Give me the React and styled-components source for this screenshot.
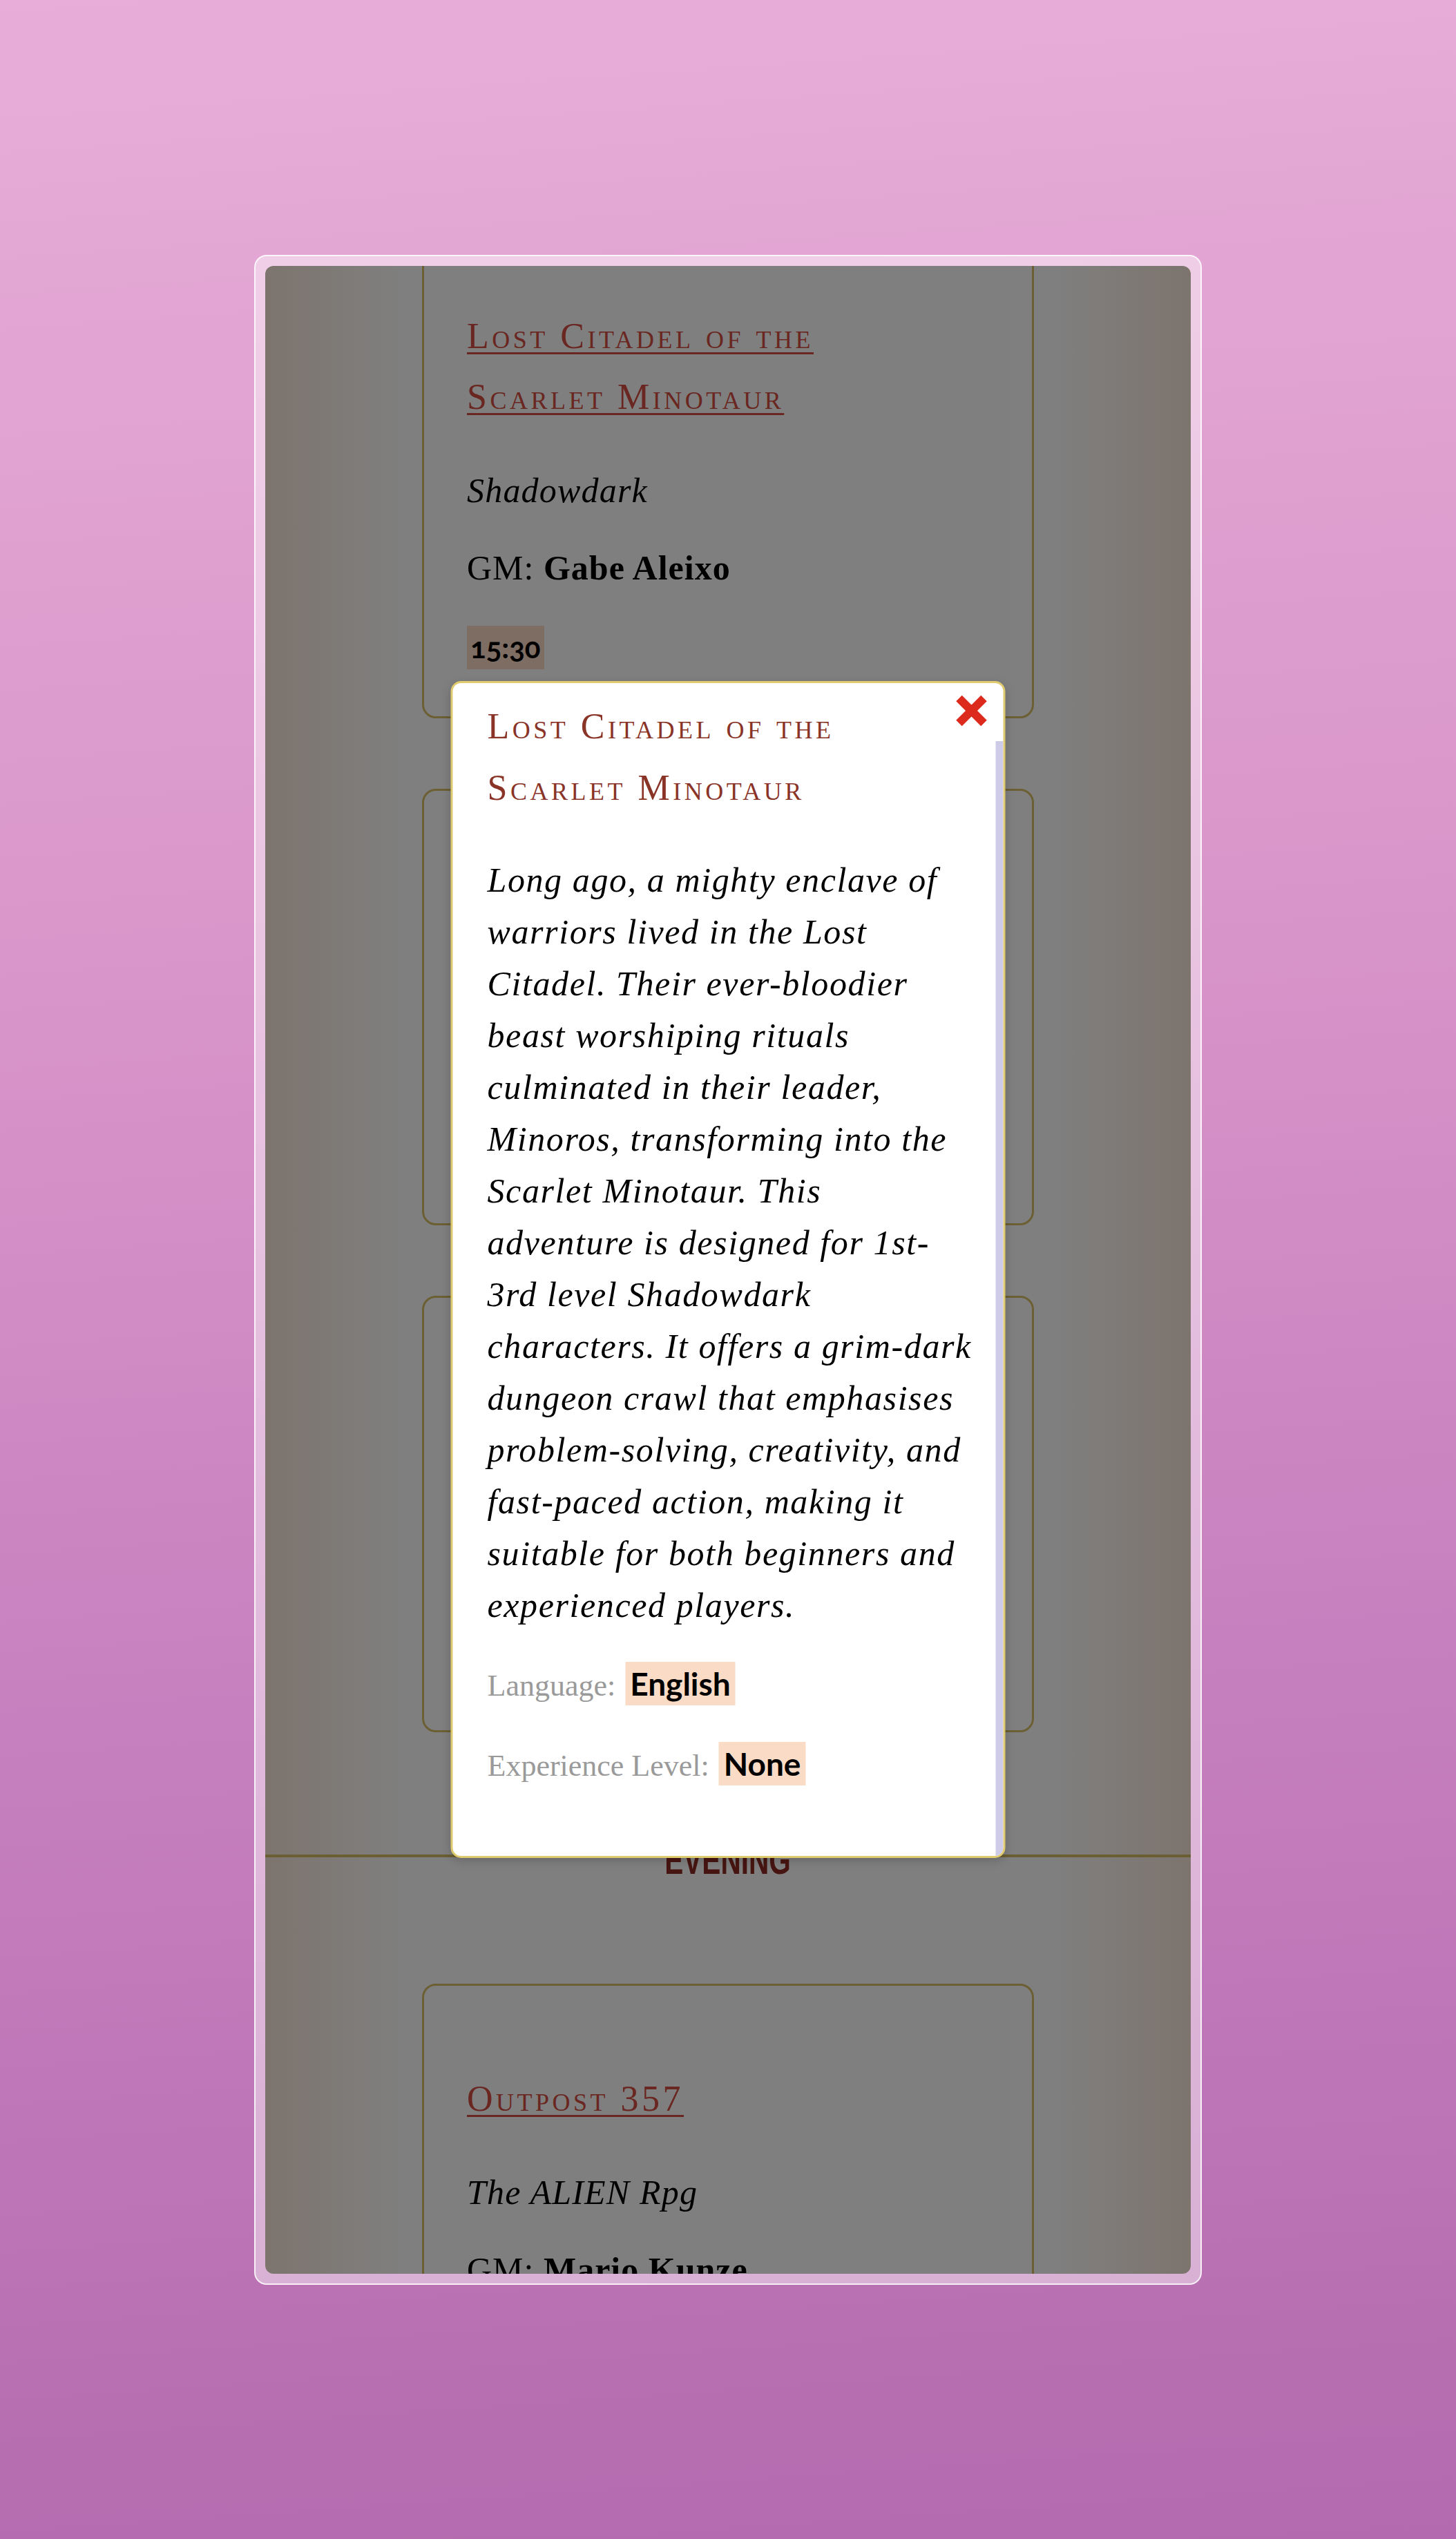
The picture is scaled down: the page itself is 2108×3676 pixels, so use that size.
import React from 'react';
import styled, { createGlobalStyle } from 'styled-components';

const GlobalStyle = createGlobalStyle`
  html, body {
    margin: 0;
    padding: 0;
  }
  body {
    font-family: "Liberation Serif", "Times New Roman", serif;
    background: linear-gradient(176deg, #e8aed9 0%, #d895c9 38%, #c57ebe 68%, #b36aae 100%);
  }
`;

const Stage = styled.div`
  min-height: 100vh;
  display: flex;
  align-items: center;
  justify-content: center;
`;

const Frame = styled.div`
  width: 1340px;
  height: 2907px;
  padding: 14px;
  border: 2px solid rgba(255, 255, 255, 0.8);
  border-radius: 18px;
  background: rgba(255, 255, 255, 0.45);
`;

const Screen = styled.div`
  position: relative;
  width: 100%;
  height: 100%;
  overflow: hidden;
  border-radius: 12px;
  background: linear-gradient(to right, #fbe9dc 0, #ffffff 200px, #ffffff calc(100% - 200px), #fbe9dc 100%);
`;

// page is scrolled a little: the first card starts above the visible area
const Page = styled.main`
  margin-top: -65px;
  display: flex;
  flex-direction: column;
  align-items: center;
`;

const Card = styled.article`
  width: 886px;
  box-sizing: border-box;
  border: 3px solid #d8bf66;
  border-radius: 20px;
  padding: 120px 62px 68px;
  margin-top: ${(p) => p.$gap || 0}px;
`;

const CardTitle = styled.a`
  display: block;
  max-width: 640px;
  font-size: 52px;
  line-height: 88px;
  font-variant: small-caps;
  letter-spacing: 4.5px;
  color: #d44c40;
  text-decoration: underline;
  text-decoration-thickness: 3px;
  text-underline-offset: 6px;
`;

const Game = styled.p`
  margin: 54px 0 0;
  font-size: 50px;
  line-height: 75px;
  font-style: italic;
  letter-spacing: 1.2px;
  color: #000;
`;

const GmLine = styled.p`
  margin: 37px 0 0;
  font-size: 50px;
  line-height: 75px;
  letter-spacing: 1px;
  color: #000;

  b {
    font-weight: 700;
  }
`;

const Tag = styled.span`
  display: inline-block;
  background: #fadbc5;
  color: #000;
  font-family: Lato, "Liberation Sans", sans-serif;
  font-weight: 700;
  font-variant-numeric: oldstyle-nums;
  font-size: ${(p) => p.$size}px;
  line-height: ${(p) => p.$size + 5}px;
  padding: ${(p) => (63 - p.$size - 5) / 2}px ${(p) => p.$pad}px;
`;

const TimeRow = styled.div`
  margin-top: 46px;
  line-height: 0;
`;

const Section = styled.section`
  width: 100%;
  margin-top: 177px;
  border-top: 4px solid #d6bd66;
  display: flex;
  flex-direction: column;
  align-items: center;
`;

const SectionHeading = styled.h2`
  margin: -25px 0 0;
  padding: 0 40px;
  background: #ffffff;
  font-family: "Liberation Sans", Arial, sans-serif;
  font-weight: 700;
  font-size: 58px;
  line-height: 58px;
  text-transform: uppercase;
  color: #8e2a22;
  transform: scaleX(0.7);
`;

const Backdrop = styled.div`
  position: absolute;
  inset: 0;
  background: rgba(0, 0, 0, 0.5);
`;

const Modal = styled.div`
  position: absolute;
  top: 50%;
  left: 50%;
  transform: translate(-50%, -50%);
  width: 803px;
  height: 1704px;
  box-sizing: border-box;
  display: flex;
  border: 3px solid #e0cb6e;
  border-radius: 15px;
  background: #ffffff;
  overflow: hidden;
  box-shadow: 0 4px 14px rgba(0, 0, 0, 0.18);
`;

const ModalBody = styled.div`
  flex: 1;
  padding: 18px 28px 0 50px;
`;

const ScrollThumb = styled.div`
  flex-shrink: 0;
  width: 11px;
  margin-top: 84px;
  background: #cdcbe8;
`;

const CloseButton = styled.button`
  position: absolute;
  top: 15px;
  right: 21px;
  width: 50px;
  height: 50px;
  padding: 0;
  border: 0;
  background: none;
  cursor: pointer;

  svg {
    display: block;
  }
`;

const ModalTitle = styled.h2`
  margin: 0;
  padding-right: 60px;
  font-size: 52px;
  line-height: 89px;
  font-weight: 400;
  font-variant: small-caps;
  letter-spacing: 4.5px;
  color: #8a3428;
`;

const Description = styled.p`
  margin: 52px 0 0;
  font-size: 50px;
  line-height: 75px;
  font-style: italic;
  letter-spacing: 1.6px;
  color: #000;
`;

const MetaRow = styled.div`
  display: flex;
  align-items: baseline;
  gap: 14px;
  margin-top: ${(p) => p.$gap}px;
`;

const MetaLabel = styled.span`
  font-size: 44px;
  line-height: 63px;
  color: #9a9a9a;
`;

const CloseIcon = () => (
  <svg width="50" height="50" viewBox="0 0 50 50">
    <path d="M7 7 L43 43 M43 7 L7 43" stroke="#dc2b1d" strokeWidth="12" fill="none" />
  </svg>
);

const afternoon = [
  { title: 'Lost Citadel of the Scarlet Minotaur', game: 'Shadowdark', gm: 'Gabe Aleixo', time: '15:30' },
  { title: 'The Haunting', game: 'Call of Cthulhu', gm: 'Lena Vogt', time: '15:30' },
  { title: 'Into the Odd', game: 'Into the Odd', gm: 'Tom Berger', time: '16:00' },
];

const evening = [
  { title: 'Outpost 357', game: 'The ALIEN Rpg', gm: 'Mario Kunze', time: '19:00' },
];

const SessionCard = ({ session, gap }) => (
  <Card $gap={gap}>
    <CardTitle href="#">{session.title}</CardTitle>
    <Game>{session.game}</Game>
    <GmLine>
      GM: <b>{session.gm}</b>
    </GmLine>
    <TimeRow>
      <Tag $size={42} $pad={5}>{session.time}</Tag>
    </TimeRow>
  </Card>
);

const App = () => {
  return (
    <>
      <GlobalStyle />
      <Stage>
        <Frame>
          <Screen>
            <Page>
              {afternoon.map((s, i) => (
                <SessionCard key={s.title} session={s} gap={i === 0 ? 0 : 102} />
              ))}
              <Section>
                <SectionHeading>Evening</SectionHeading>
                {evening.map((s) => (
                  <SessionCard key={s.title} session={s} gap={150} />
                ))}
              </Section>
            </Page>
            <Backdrop />
            <Modal role="dialog">
              <ModalBody>
                <ModalTitle>Lost Citadel of the Scarlet Minotaur</ModalTitle>
                <Description>
                  Long ago, a mighty enclave of warriors lived in the Lost Citadel. Their ever-bloodier beast
                  worshiping rituals culminated in their leader, Minoros, transforming into the Scarlet Minotaur.
                  This adventure is designed for 1st-3rd level Shadowdark characters. It offers a grim-dark
                  dungeon crawl that emphasises problem-solving, creativity, and fast-paced action, making it
                  suitable for both beginners and experienced players.
                </Description>
                <MetaRow $gap={44}>
                  <MetaLabel>Language:</MetaLabel>
                  <Tag $size={46} $pad={7}>English</Tag>
                </MetaRow>
                <MetaRow $gap={50}>
                  <MetaLabel>Experience Level:</MetaLabel>
                  <Tag $size={46} $pad={7}>None</Tag>
                </MetaRow>
              </ModalBody>
              <ScrollThumb />
              <CloseButton aria-label="Close">
                <CloseIcon />
              </CloseButton>
            </Modal>
          </Screen>
        </Frame>
      </Stage>
    </>
  );
};

export default App;
